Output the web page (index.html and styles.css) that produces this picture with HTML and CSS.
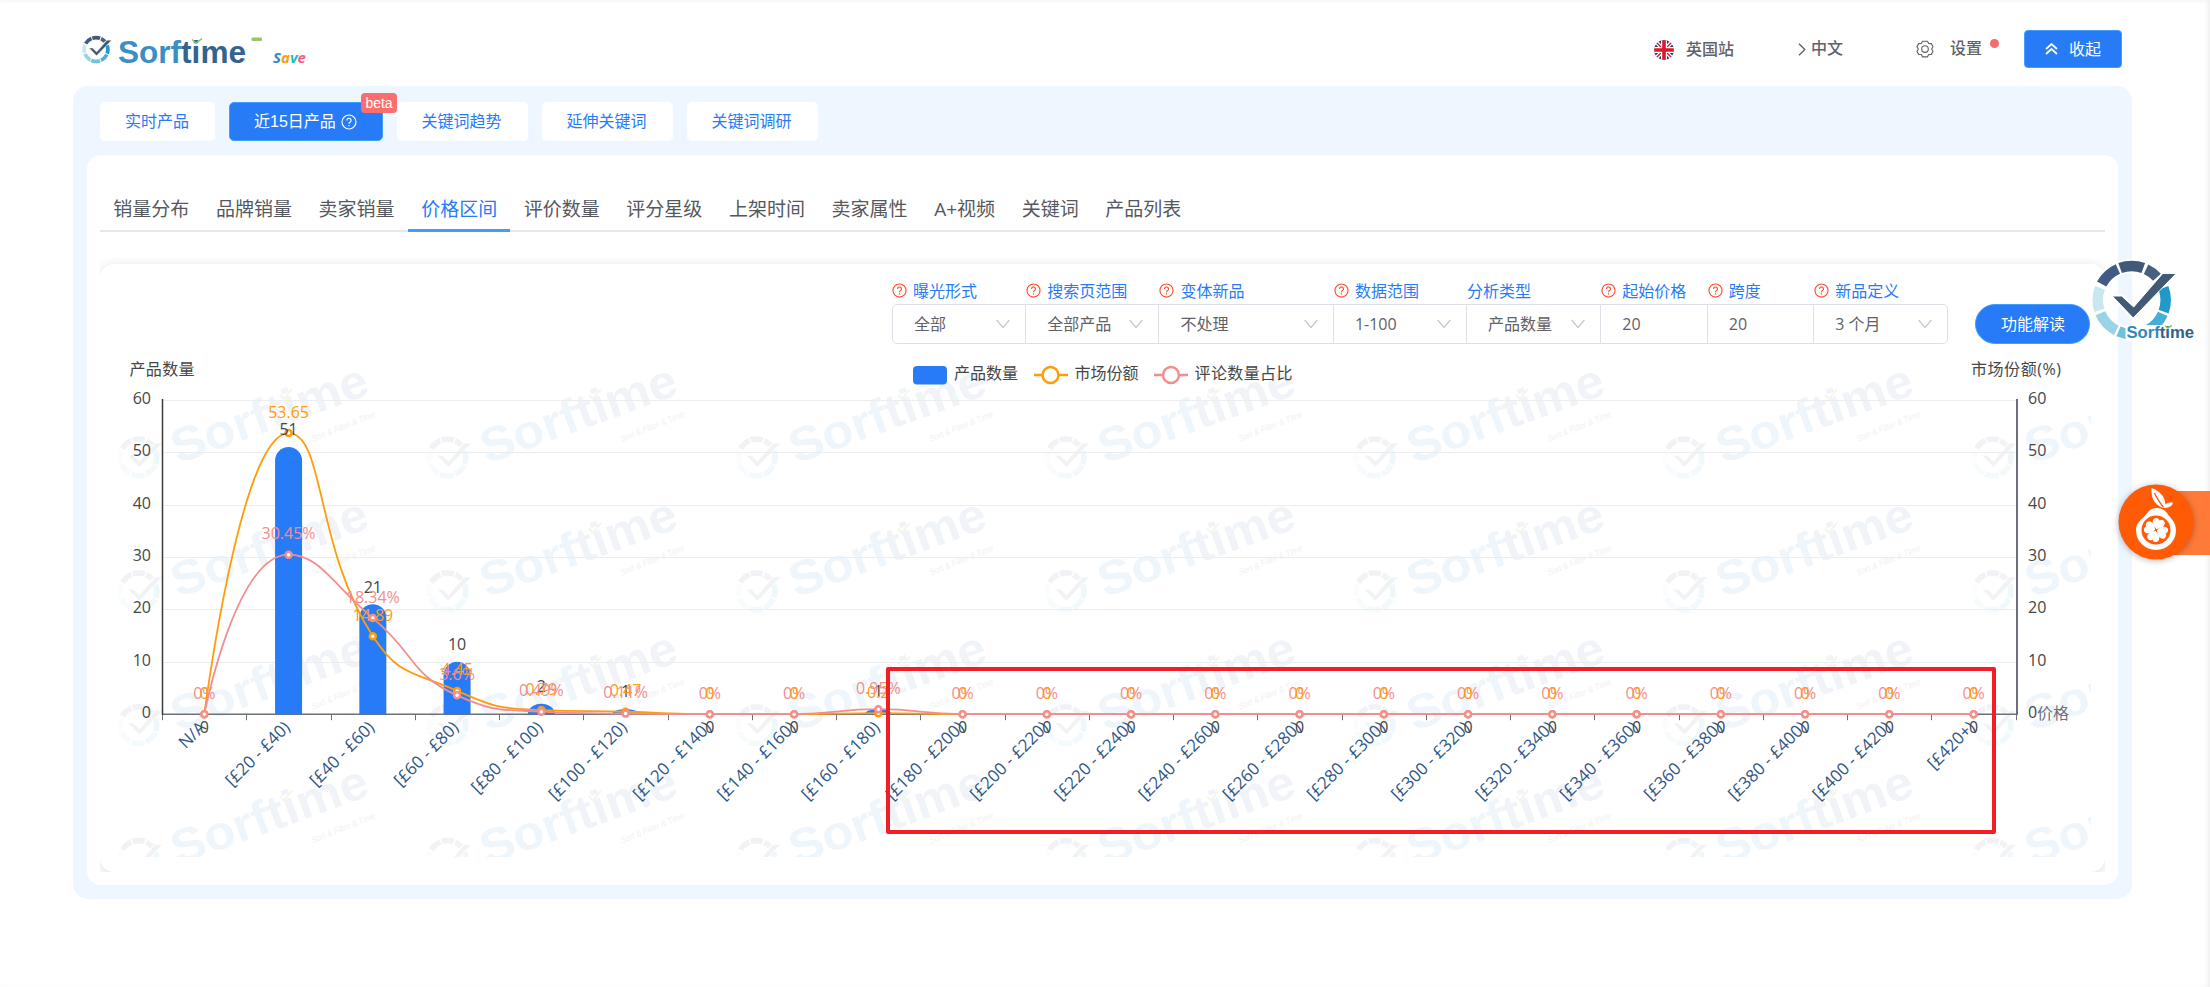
FILE: index.html
```html
<!DOCTYPE html>
<html lang="zh-CN">
<head>
<meta charset="utf-8">
<title>Sorftime</title>
<link rel="stylesheet" href="styles.css">
</head>
<body>
<svg class="defs" aria-hidden="true">
  <defs>
    <symbol id="ring" viewBox="0 0 100 100" overflow="visible">
      <g class="ring-seg" transform="rotate(-90 50 50)">
        <circle cx="50" cy="50" r="34" pathLength="360" stroke="#43597a" stroke-dasharray="40 320" stroke-dashoffset="20"/>
        <circle cx="50" cy="50" r="34" pathLength="360" stroke="#47607f" stroke-dasharray="23 337" stroke-dashoffset="-25"/>
        <circle cx="50" cy="50" r="34" pathLength="360" stroke="#2099c9" stroke-dasharray="41 319" stroke-dashoffset="-69"/>
        <circle cx="50" cy="50" r="34" pathLength="360" stroke="#45afd7" stroke-dasharray="40 320" stroke-dashoffset="-114"/>
        <circle cx="50" cy="50" r="34" pathLength="360" stroke="#6cc3dc" stroke-dasharray="44 316" stroke-dashoffset="-159"/>
        <circle cx="50" cy="50" r="34" pathLength="360" stroke="#98d3e6" stroke-dasharray="40 320" stroke-dashoffset="-207"/>
        <circle cx="50" cy="50" r="34" pathLength="360" stroke="#cae6ee" stroke-dasharray="39 321" stroke-dashoffset="-252"/>
        <circle cx="50" cy="50" r="34" pathLength="360" stroke="#405b84" stroke-dasharray="38 322" stroke-dashoffset="-298"/>
      </g>
      <path d="M30.500 46L40 46L52 57L81 23.500L94.500 23.500L51.500 68Z" fill="#435a75" stroke="#fff" stroke-width="1"/>
    </symbol>
    <symbol id="help" viewBox="0 0 16 16">
      <circle cx="8" cy="8" r="7" fill="none" stroke="currentColor" stroke-width="1.200"/>
      <path d="M5.900 6.400a2.100 2.100 0 1 1 3.300 1.700c-.8.5-1.200.9-1.200 1.700M8 11v1.300" fill="none" stroke="currentColor" stroke-width="1.200"/>
    </symbol>
    <symbol id="down" viewBox="0 0 14 10"><path d="M.6.8L7 8.600L13.400.8" fill="none" stroke="currentColor" stroke-width="1.300"/></symbol>
  </defs>
</svg>

<header class="top">
  <div class="brand">
    <svg class="brand-logo" width="190" height="40" viewBox="80 30 190 40">
      <use href="#ring" x="78.500" y="32" width="35" height="35"/>
      <text x="118" y="62.500" class="brand-text" textLength="128" lengthAdjust="spacingAndGlyphs"><tspan fill="#3c8fc4">Sorf</tspan><tspan fill="#33638f">time</tspan></text>
      <path d="M192 39.500l4 3.500l6-4.500l-5.500 4.800z" fill="#8fc463" stroke="#8fc463" stroke-width="1.200"/>
      <rect x="251.500" y="37.500" width="10.500" height="3.600" rx="1" fill="#97c76b"/>
    </svg>
    <span class="save"><i class="c1">S</i><i class="c2">a</i><i class="c3">v</i><i class="c4">e</i></span>
  </div>
  <nav class="tools">
    <span class="tool site">
      <svg width="20" height="20" viewBox="0 0 20 20"><clipPath id="fc"><circle cx="10" cy="10" r="9.900"/></clipPath><g clip-path="url(#fc)"><path fill="#243a76" d="M0 0h20v20H0z"/><path d="M0 0L20 20M20 0L0 20" stroke="#fff" stroke-width="4"/><path d="M0 0L20 20M20 0L0 20" stroke="#d8182d" stroke-width="1.400"/><path d="M10 0v20M0 10h20" stroke="#fff" stroke-width="6"/><path d="M10 0v20M0 10h20" stroke="#d8182d" stroke-width="3.600"/></g></svg>
      英国站</span>
    <span class="tool lang"><svg width="8" height="13" viewBox="0 0 8 13"><path d="M1 .8L6.800 6.500L1 12.200" fill="none" stroke="#606266" stroke-width="1.400"/></svg>中文</span>
    <span class="tool setting"><svg width="18" height="18" viewBox="0 0 18 18" fill="none" stroke="#606266" stroke-width="1.150"><path d="M6.500 1.200h5l1.200 2.300 2.600.1 1.700 2.900L15.700 9l1.300 2.500-1.700 2.900-2.600.1-1.200 2.300h-5l-1.200-2.300-2.600-.1L1 11.500 2.300 9 1 6.500l1.700-2.900 2.600-.1z" stroke-linejoin="round"/><circle cx="9" cy="9" r="3.300"/></svg>设置<b class="dot"></b></span>
    <button class="collapse"><svg width="13" height="12" viewBox="0 0 13 12"><path d="M1 6L6.500 1L12 6M1 11L6.500 6L12 11" fill="none" stroke="#fff" stroke-width="1.700"/></svg>收起</button>
  </nav>
</header>

<main class="panel">
  <div class="modes">
    <button class="mode">实时产品</button>
    <button class="mode active">近15日产品<svg width="16" height="16"><use href="#help"/></svg><em class="beta">beta</em></button>
    <button class="mode">关键词趋势</button>
    <button class="mode">延伸关键词</button>
    <button class="mode">关键词调研</button>
  </div>
  <section class="content">
    <nav class="tabs">
      <a class="tab">销量分布</a><a class="tab">品牌销量</a><a class="tab">卖家销量</a><a class="tab on">价格区间</a><a class="tab">评价数量</a><a class="tab">评分星级</a><a class="tab">上架时间</a><a class="tab">卖家属性</a><a class="tab">A+视频</a><a class="tab">关键词</a><a class="tab">产品列表</a>
    </nav>
    <div class="clip">
      <div class="card">
        <div class="filters">
          <div class="f w134"><label><svg><use href="#help"/></svg>曝光形式</label><div class="box">全部<svg><use href="#down"/></svg></div></div>
          <div class="f w133"><label><svg><use href="#help"/></svg>搜索页范围</label><div class="box">全部产品<svg><use href="#down"/></svg></div></div>
          <div class="f w174"><label><svg><use href="#help"/></svg>变体新品</label><div class="box">不处理<svg><use href="#down"/></svg></div></div>
          <div class="f w133"><label><svg><use href="#help"/></svg>数据范围</label><div class="box">1-100<svg><use href="#down"/></svg></div></div>
          <div class="f w134"><label>分析类型</label><div class="box">产品数量<svg><use href="#down"/></svg></div></div>
          <div class="f w106"><label><svg><use href="#help"/></svg>起始价格</label><div class="box">20</div></div>
          <div class="f w107"><label><svg><use href="#help"/></svg>跨度</label><div class="box">20</div></div>
          <div class="f w134"><label><svg><use href="#help"/></svg>新品定义</label><div class="box">3 个月<svg><use href="#down"/></svg></div></div>
          <button class="explain">功能解读</button>
        </div>
        <svg id="chart" class="chart" width="2005" height="523" viewBox="100 349 2005 523"></svg>
      </div>
    </div>
  </section>
</main>

<div class="mark"></div>

<svg class="float-logo" width="125" height="100" viewBox="2085 250 125 100">
  <circle cx="2131.700" cy="300" r="34" fill="none" stroke="#fff" stroke-width="14"/>
  <path d="M2112 296l9.500 0l12 11l29-33.500l13 0l-43 44.500z" fill="#fff" stroke="#fff" stroke-width="3"/>
  <use href="#ring" x="2081.700" y="250" width="100" height="100"/>
  <rect x="2125.500" y="325" width="70" height="15" rx="3" fill="#fff"/>
  <text x="2126.500" y="338" class="float-text" textLength="67.500" lengthAdjust="spacingAndGlyphs"><tspan fill="#3387b8">Sorf</tspan><tspan fill="#2d628b">time</tspan></text>
  <path d="M2165 326l3 2l4-2.500" fill="none" stroke="#8fc463" stroke-width="1.500"/>
</svg>

<div class="orange">
  <svg width="78" height="78" viewBox="0 0 78 78">
    <circle cx="39" cy="39" r="37.500" fill="#ff5a05"/>
    <path d="M39 25c-4 0-7 2-9.500 6C25 36.500 19 39 19 47.500a20 19.500 0 0 0 40 0C59 39 54 36 50 30c-3-4-7-5-11-5z" fill="#fff"/>
    <circle cx="39" cy="47" r="14.500" fill="#ff5a05"/>
    <g fill="#fff"><path id="petal" transform="rotate(20 39 47)" d="M39 46c-5-2.500-6.800-5.500-6-8.300c1.200-3 5-3 6-.7c1-2.300 4.800-2.300 6 .7c.8 2.800-1 5.800-6 8.300z"/><use href="#petal" transform="rotate(90 39 47)"/><use href="#petal" transform="rotate(180 39 47)"/><use href="#petal" transform="rotate(270 39 47)"/></g>
    <path d="M34.500 5c8 3 14 8 14 18.500l-3 1.500C37.500 21 34 16 34.500 5z" fill="#fff"/>
    <path d="M46 25c1-4 5-6 10-5.500c-1 4-4 5.500-10 5.500z" fill="#fff"/>
    <path d="M37.500 10c2 5 5 9 9 14.500" stroke="#ff5a05" stroke-width="1.300" fill="none"/>
  </svg>
</div>
<script src="chart.js"></script>
</body>
</html>
```
FILE: styles.css
```css
* { box-sizing: border-box; }
body {
  margin: 0; width: 2210px; height: 987px; position: relative; overflow: hidden;
  background: #fff; color: #606266;
  font: 16px/20px "Open Sans", "Noto Sans CJK SC", sans-serif;
  box-shadow: inset -3px 1px 4px rgba(0,0,0,.06);
}
button { font: inherit; border: 0; margin: 0; padding: 0; }
.defs { position: absolute; width: 0; height: 0; }
.ring-seg { fill: none; stroke-width: 10.500; }

.top { height: 86px; padding: 0 88px 0 80px; display: flex; justify-content: space-between; }
.brand { display: flex; padding-top: 30px; }
.brand-logo { display: block; }
.brand-text { font: bold 32px "Liberation Sans", sans-serif; }
.save { margin: 17px 0 0 3px; font: italic bold 15px/20px "Open Sans", sans-serif; }
.save i { font-style: italic; }
.c1 { color: #3089c9; } .c2 { color: #ff9b12; } .c3 { color: #15c4bb; } .c4 { color: #ff5a84; }
.tools { display: flex; align-items: center; padding-top: 12px; }
.tool { display: flex; align-items: center; font-family: "Liberation Sans", "Noto Sans CJK SC", sans-serif; font-weight: 500; }
.site { gap: 12px; margin-right: 64px; padding-top: 2px; }
.lang { gap: 5px; margin-right: 73px; }
.setting { gap: 16px; position: relative; margin-right: 42px; }
.dot { position: absolute; width: 9px; height: 9px; border-radius: 50%; background: #f56c6c; right: -17px; top: 0; }
.collapse {
  width: 98px; height: 38px; border-radius: 4px; background: #287bf7; color: #fff; border: 1px solid #409eff;
  display: flex; align-items: center; justify-content: center; gap: 11px;
}

.panel { margin-left: 73px; width: 2059px; height: 813px; background: #eef6ff; border-radius: 15px; padding: 16px 14px 14px; }
.modes { display: flex; gap: 14px; padding-left: 13px; height: 53px; }
.mode {
  height: 39px; padding: 0 25px; border-radius: 5px; background: #fff; color: #287bf7; position: relative;
  display: flex; align-items: center; font-family: "Liberation Sans", "Noto Sans CJK SC", sans-serif;
}
.mode:nth-child(n+3) { width: 131px; padding: 0 2px 0 0; justify-content: center; }
.mode:nth-child(1) { width: 115px; }
.mode.active { width: 154px; padding: 0 0 0 24px; gap: 5px; background: #287bf7; color: #fff; border: 1px solid #409eff; white-space: nowrap; }
.beta {
  position: absolute; right: -15px; top: -10px; width: 36px; height: 20px; border-radius: 4px; background: #fa6e6e; z-index: 2;
  color: #fff; font: 14px/20px "Liberation Sans", sans-serif; text-align: center;
}
.content { background: #fff; border-radius: 14px; width: 2031px; height: 730px; padding: 28px 13px 13px; }
.tabs { display: flex; height: 49px; border-bottom: 2px solid #e4e7ed; }
.tab { padding: 14px 13.300px 0; height: 49px; font-size: 19px; line-height: 25px; color: #55585e; white-space: nowrap; }
.tab.on { color: #287bf7; border-bottom: 3px solid #409eff; }
.clip { margin-top: 25px; height: 615px; overflow: hidden; padding-top: 7px; }
.card { height: 608px; border-radius: 14px; background: #fff; box-shadow: 0 2px 12px rgba(0,0,0,.14); overflow: hidden; }
.filters { display: flex; height: 85px; padding: 16px 0 0 792px; align-items: flex-start; }
.f label { display: flex; align-items: center; gap: 6px; height: 24px; padding-bottom: 3px; color: #287bf7; white-space: nowrap; }
.f label svg { width: 15px; height: 15px; color: #ff4a2b; }
.box { display: flex; align-items: center; justify-content: space-between; height: 40px; border: 1px solid #dcdfe6; border-left-width: 0; padding: 0 15px 0 21px; white-space: nowrap; }
.f:first-child .box { border-left-width: 1px; border-radius: 5px 0 0 5px; }
.f:nth-child(8) .box { border-radius: 0 5px 5px 0; }
.box svg { width: 14px; height: 10px; color: #c0c4cc; }
.w106 { width: 106.500px; } .w107 { width: 106.500px; } .w133 { width: 133.200px; } .w134 { width: 134.200px; } .w174 { width: 174.500px; }
.explain { margin: 24px 0 0 27px; width: 115px; height: 40px; border-radius: 20px; background: #287bf7; border: 1px solid #409eff; color: #fff; }
.chart { display: block; font-size: 16px; }
.chart text { font-family: "Open Sans", "Noto Sans CJK SC", sans-serif; }
.axis-text { fill: #464646; }
.name-text { fill: #6e7079; }
.cat-text { fill: #2f5686; text-anchor: end; font-size: 17px; }
.val { text-anchor: middle; }
.wm-text { font-weight: bold; }
.chart .wm-text { font-family: "Liberation Sans", sans-serif; font-size: 48px; }
.chart .wm-tag { font-family: "Liberation Sans", sans-serif; font-size: 9px; font-style: italic; fill: #f0f2f0; }
.wm-ring { opacity: .07; }

.mark { position: absolute; left: 886px; top: 667px; width: 1110px; height: 167px; border: 4px solid #f21d25; border-radius: 2px; }
.float-logo { position: absolute; left: 2085px; top: 250px; }
.float-text { font: bold 17px "Liberation Sans", sans-serif; }
.orange { position: absolute; left: 2156px; top: 491px; width: 54px; height: 64px; background: #ff7a38; }
.orange svg { position: absolute; left: -39px; top: -8px; filter: drop-shadow(0 1px 3px rgba(0,0,0,.3)); }
```
FILE: chart.js
```javascript
const svg = document.getElementById('chart');
const X0 = 162.5, STEP = 84.25, Y0 = 714.2, UNIT = 5.24, XR = 2017;
const names = ['N/A'];
for (let p = 20; p < 420; p += 20) names.push(`[£${p} - £${p + 20})`);
names.push('[£420+)');
const bars = names.map(() => 0), share = bars.slice(), reviews = bars.slice();
[0, 51, 21, 10, 2, 1, 0, 0, 1].forEach((v, i) => { bars[i] = v; });
[0, 53.65, 14.89, 4.45, 0.79, 0.47, 0, 0, 0.2].forEach((v, i) => { share[i] = v; });
[0, 30.45, 18.34, 3.6, 0.49, 0.11, 0, 0, 0.95].forEach((v, i) => { reviews[i] = v; });

const cx = i => X0 + STEP * (i + 0.5) - 0.3;
const cy = v => Y0 - v * UNIT;
let out = '<clipPath id="wm"><rect x="110" y="349" width="1981" height="508"/></clipPath><g clip-path="url(#wm)">';

// Watermark tiles
for (let r = 0; r < 4; r++) {
  for (let c = 0; c < 7; c++) {
    out += `<g transform="translate(${c * 309} ${r * 133.8})">
      <use href="#ring" class="wm-ring" x="111.500" y="430.500" width="54" height="54"/>
      <g transform="translate(178 464) rotate(-20)"><text class="wm-text" textLength="206" lengthAdjust="spacingAndGlyphs"><tspan fill="#eff6fb">Sorf</tspan><tspan fill="#f0f3f7">time</tspan></text></g>
      <path d="M280 395l4 4l8-10" fill="none" stroke="#f2f7ea" stroke-width="2"/>
      <text class="wm-tag" transform="translate(313 442) rotate(-22)" textLength="68" lengthAdjust="spacingAndGlyphs">Sort &amp; Filter &amp; Time</text></g>`;
  }
}
out += '</g>';

// Legend and axis titles
out += `<rect x="913" y="366" width="34" height="18.500" rx="4" fill="#287bf7"/>
  <text class="axis-text" x="954" y="379">产品数量</text>
  <path d="M1034 375h34" stroke="#ff9c09" stroke-width="2.500"/><circle cx="1050.500" cy="375" r="8" fill="#fff" stroke="#ff9c09" stroke-width="2.500"/>
  <text class="axis-text" x="1074.500" y="379">市场份额</text>
  <path d="M1154 375h34" stroke="#f28e90" stroke-width="2.500"/><circle cx="1171" cy="375" r="8" fill="#fff" stroke="#f28e90" stroke-width="2.500"/>
  <text class="axis-text" x="1194.500" y="379" textLength="98">评论数量占比</text>
  <text class="axis-text" x="129.500" y="375" textLength="65">产品数量</text>
  <text class="axis-text" x="1971" y="375" textLength="90">市场份额(%)</text>`;

// Grid and axis labels
for (let v = 0; v <= 60; v += 10) {
  const y = Math.round(cy(v)) + 0.5;
  if (v) out += `<path d="M${X0} ${y}H${XR}" stroke="#ebedee"/>`;
  out += `<text class="axis-text" x="151" y="${cy(v) + 4}" text-anchor="end">${v}</text>
    <text class="axis-text" x="2028" y="${cy(v) + 4}">${v}</text>`;
}
out += `<text class="name-text" x="2037" y="718.500">价格</text>`;
out += `<path d="M${X0} ${Y0}H${XR}" stroke="#6e7079" stroke-width="1.500"/>`;
for (let i = 0; i <= 22; i++) out += `<path d="M${Math.round(X0 + STEP * i - 0.5) + 0.5} ${Y0}v6" stroke="#6e7079"/>`;
out += `<path d="M162.500 399V715" stroke="#3a3a3a" stroke-width="1.500"/><path d="M${XR} 399V715" stroke="#6e7079" stroke-width="2"/>`;
names.forEach((n, i) => {
  out += `<text class="cat-text" transform="translate(${cx(i) + 2.5} 728.500) rotate(-45)">${n}</text>`;
});

// Bars with rounded tops
bars.forEach((v, i) => {
  if (!v) return;
  const h = v * UNIT, r = Math.min(13.5, h), l = cx(i) - 13.5;
  out += `<path d="M${l} ${Y0}V${Y0 - h + r}a13.500 ${r} 0 0 1 27 0V${Y0}z" fill="#287bf7"/>`;
});

// Smoothed line through the points, control points kept inside each segment
function smooth(data) {
  const p = data.map((v, i) => [cx(i), cy(v)]);
  const clamp = (v, a, b) => Math.max(Math.min(a, b), Math.min(Math.max(a, b), v));
  let d = `M${p[0]}`, c0 = p[0];
  for (let i = 1; i < p.length; i++) {
    const a = p[i - 1], b = p[i], n = p[i + 1];
    let c1 = b, next = b;
    if (n) {
      const lp = Math.hypot(b[0] - a[0], b[1] - a[1]), ln = Math.hypot(n[0] - b[0], n[1] - b[1]);
      const k = ln / (ln + lp);
      next = [0, 1].map(j => clamp(b[j] + (n[j] - a[j]) * 0.5 * k, n[j], b[j]));
      c1 = [0, 1].map(j => clamp(b[j] - (next[j] - b[j]) * lp / ln, a[j], b[j]));
      next = [0, 1].map(j => b[j] + (b[j] - c1[j]) * ln / lp);
    }
    d += `C${c0} ${c1} ${b}`;
    c0 = next;
  }
  return d;
}
[[share, '#ff9c09'], [reviews, '#f28e90']].forEach(([data, color]) => {
  out += `<path d="${smooth(data)}" fill="none" stroke="${color}" stroke-width="1.800"/>`;
  data.forEach((v, i) => { out += `<circle cx="${cx(i)}" cy="${cy(v)}" r="3" fill="#fff" stroke="${color}" stroke-width="2.500"/>`; });
});

// Value labels
const label = (i, y, t, color) => { out += `<text class="val" x="${cx(i)}" y="${y}" fill="${color}">${t}</text>`; };
bars.forEach((v, i) => label(i, v ? cy(v) - 11.5 : 732.5, v, '#464646'));
share.forEach((v, i) => { if (v) label(i, cy(v) - 15.5, v, '#ff9c09'); });
reviews.forEach((v, i) => label(i, cy(v) - 15.5, v + '%', '#f28e90'));
share.forEach((v, i) => { if (!v) label(i, cy(v) - 15.5, v, '#ff9c09'); });
svg.innerHTML = out;
```
